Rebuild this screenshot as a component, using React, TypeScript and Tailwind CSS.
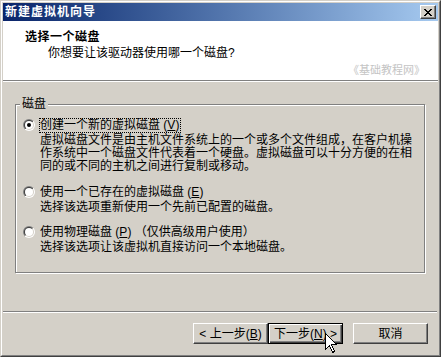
import { useId } from "react";

// Win2000-style 3D edges
const raised =
  "border border-t-white border-l-white border-r-[#404040] border-b-[#404040] shadow-[inset_-1px_-1px_0_#808080]";

function Radio({ checked }: { checked?: boolean }) {
  const raw = useId().replace(/[^a-zA-Z0-9]/g, "");
  const outer = `ro${raw}`;
  const inner = `ri${raw}`;
  return (
    <svg width="12" height="12" viewBox="0 0 12 12" className="shrink-0 mt-[1px]">
      <defs>
        <linearGradient id={outer} x1="0" y1="0" x2="1" y2="1">
          <stop offset="0.5" stopColor="#808080" />
          <stop offset="0.5" stopColor="#ffffff" />
        </linearGradient>
        <linearGradient id={inner} x1="0" y1="0" x2="1" y2="1">
          <stop offset="0.5" stopColor="#404040" />
          <stop offset="0.5" stopColor="#d4d0c8" />
        </linearGradient>
      </defs>
      <circle cx="6" cy="6" r="6" fill={`url(#${outer})`} />
      <circle cx="6" cy="6" r="5" fill={`url(#${inner})`} />
      <circle cx="6" cy="6" r="4" fill="#ffffff" />
      {checked && <circle cx="6" cy="6" r="2" fill="#000000" />}
    </svg>
  );
}

function CloseGlyph() {
  // 8x7 pixel X
  const rows: [number, number][][] = [
    [[0, 2], [6, 2]],
    [[1, 2], [5, 2]],
    [[2, 4]],
    [[3, 2]],
    [[2, 4]],
    [[1, 2], [5, 2]],
    [[0, 2], [6, 2]],
  ];
  return (
    <svg width="8" height="7" viewBox="0 0 8 7" shapeRendering="crispEdges">
      {rows.map((segs, y) =>
        segs.map(([x, w]) => <rect key={`${y}-${x}`} x={x} y={y} width={w} height={1} fill="#000" />)
      )}
    </svg>
  );
}

function Option({
  label,
  mnemonic,
  suffix,
  lines,
  checked,
  focused,
  className,
}: {
  label: string;
  mnemonic: string;
  suffix?: string;
  lines: string[];
  checked?: boolean;
  focused?: boolean;
  className?: string;
}) {
  return (
    <div className={`flex ${className ?? ""}`}>
      <Radio checked={checked} />
      <div className="ml-[4px] flex flex-col">
        <span
          className={`self-start border pr-[1px] leading-[13px] whitespace-nowrap ${
            focused ? "border-dotted border-black" : "border-transparent"
          }`}
        >
          {label} (<span className="underline">{mnemonic}</span>){suffix}
        </span>
        <div className="pl-[1px] pt-[1px] leading-[13px]">
          {lines.map((l) => (
            <div key={l} className="whitespace-nowrap">
              {l}
            </div>
          ))}
        </div>
      </div>
    </div>
  );
}

export default function App() {
  return (
    <div className="relative w-[441px] h-[357px] overflow-hidden bg-[#d4d0c8] border border-t-[#d4d0c8] border-l-[#d4d0c8] border-r-[#404040] border-b-[#404040] text-[12px] text-black font-['Liberation_Sans','Noto_Sans_CJK_SC',sans-serif]">
      <div className="h-full flex flex-col border border-t-white border-l-white border-r-[#808080] border-b-[#808080] p-[1px]">
        {/* Title bar */}
        <div className="h-[18px] shrink-0 flex items-center justify-between px-[2px] bg-linear-to-r from-[#0a246a] to-[#a6caf0]">
          <span className="text-white font-bold leading-[12px] tracking-[1px]">新建虚拟机向导</span>
          <div className={`w-[16px] h-[14px] bg-[#d4d0c8] flex items-center justify-center ${raised}`}>
            <CloseGlyph />
          </div>
        </div>

        {/* Header */}
        <div className="h-[59px] shrink-0 bg-white flex flex-col pt-[10px]">
          <div className="pl-[22px] font-bold leading-[12px] tracking-[0.5px]">选择一个磁盘</div>
          <div className="pl-[45px] mt-[4px] leading-[12px]">你想要让该驱动器使用哪一个磁盘?</div>
          <div className="self-end pr-[13px] mt-[6px] text-[11px] leading-[11px] text-[#c4c4c4]">《基础教程网》</div>
        </div>
        <div className="h-[1px] bg-[#808080] shrink-0" />
        <div className="h-[1px] bg-white shrink-0" />

        {/* Group box */}
        <fieldset className="ml-[12px] mt-[15px] w-[410px] h-[176px] shrink-0 border border-[#808080] shadow-[inset_1px_1px_0_#fff,1px_1px_0_#fff]">
          <legend className="ml-[4px] px-[2px] leading-[14px] bg-[#d4d0c8]">磁盘</legend>
          <div className="pt-[7px] pl-[7px] flex flex-col">
            <Option
              checked
              focused
              label="创建一个新的虚拟磁盘"
              mnemonic="V"
              lines={[
                "虚拟磁盘文件是由主机文件系统上的一个或多个文件组成，在客户机操",
                "作系统中一个磁盘文件代表着一个硬盘。虚拟磁盘可以十分方便的在相",
                "同的或不同的主机之间进行复制或移动。",
              ]}
            />
            <Option
              className="mt-[12px]"
              label="使用一个已存在的虚拟磁盘"
              mnemonic="E"
              lines={["选择该选项重新使用一个先前已配置的磁盘。"]}
            />
            <Option
              className="mt-[11px]"
              label="使用物理磁盘"
              mnemonic="P"
              suffix=" （仅供高级用户使用）"
              lines={["选择该选项让该虚拟机直接访问一个本地磁盘。"]}
            />
          </div>
        </fieldset>

        <div className="mt-[38px] mr-[1px] h-[1px] bg-[#808080] shrink-0" />
        <div className="mr-[1px] h-[1px] bg-white shrink-0" />

        {/* Buttons */}
        <div className="mt-[10px] pr-[10px] flex justify-end">
          <button className={`w-[75px] h-[21px] bg-[#d4d0c8] flex items-center justify-center leading-[12px] ${raised}`}>
            &lt; 上一步(<span className="underline">B</span>)
          </button>
          <button className="w-[75px] h-[21px] bg-[#d4d0c8] flex items-center justify-center leading-[12px] border border-black shadow-[inset_1px_1px_0_#fff,inset_-1px_-1px_0_#404040,inset_-2px_-2px_0_#808080]">
            下一步(<span className="underline">N</span>) &gt;
          </button>
          <button className={`ml-[10px] w-[75px] h-[21px] bg-[#d4d0c8] flex items-center justify-center leading-[12px] ${raised}`}>
            取消
          </button>
        </div>
      </div>

      {/* Mouse pointer */}
      <svg
        className="absolute left-[324px] top-[332px]"
        width="13"
        height="21"
        viewBox="0 0 13 21"
        shapeRendering="crispEdges"
      >
        <path d="M0.5 0.5 L0.5 16.5 L4.5 12.5 L7.5 19.5 L9.5 18.5 L6.5 11.5 L11.5 11.5 Z" fill="#fff" stroke="#000" strokeWidth="1" />
      </svg>
    </div>
  );
}
